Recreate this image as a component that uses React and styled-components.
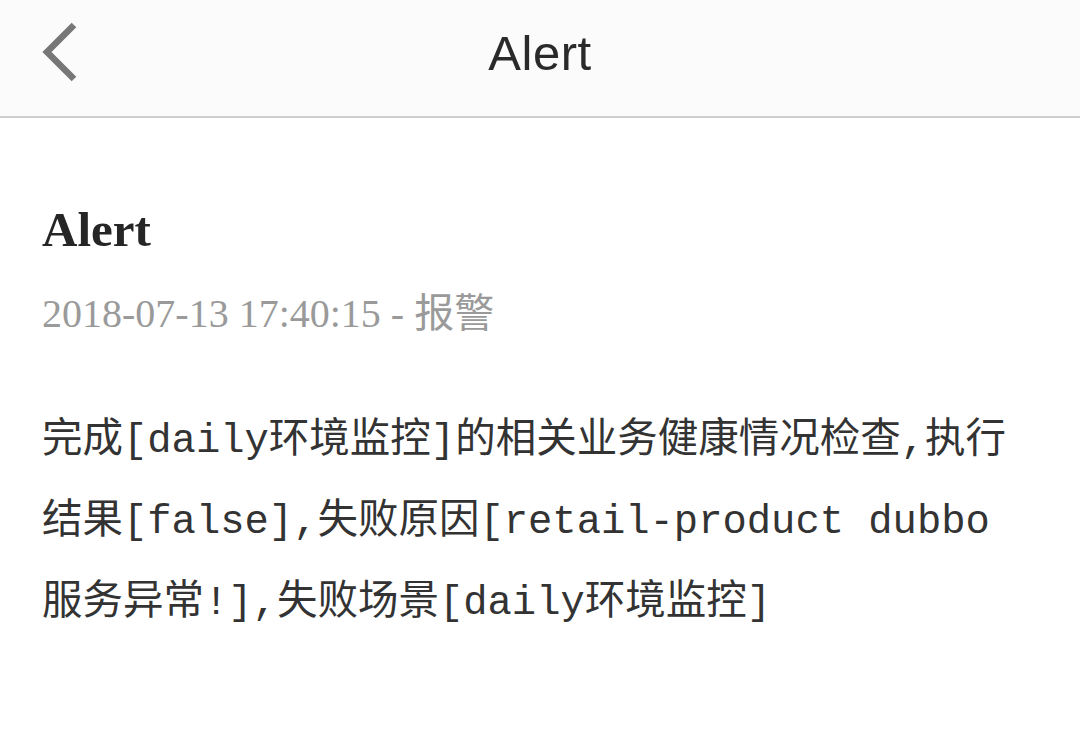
import React from "react";
import styled, { createGlobalStyle } from "styled-components";

const GlobalStyle = createGlobalStyle`
  html, body {
    margin: 0;
    padding: 0;
    background: #ffffff;
  }
  #root {
    width: 1080px;
    height: 734px;
    overflow: hidden;
  }
`;

const BackIcon = () => (
  <svg width="42" height="66" viewBox="0 0 42 66" fill="none">
    <path
      d="M36 6 L9 33 L36 60"
      stroke="#777777"
      strokeWidth="6.5"
      strokeLinecap="butt"
      strokeLinejoin="miter"
    />
  </svg>
);

const App = () => {
  return (
    <Page>
      <GlobalStyle />
      <NavBar>
        <BackButton>
          <BackIcon />
        </BackButton>
        <NavTitle>Alert</NavTitle>
        <NavSpacer />
      </NavBar>
      <Article>
        <Title>Alert</Title>
        <Meta>2018-07-13 17:40:15 - 报警</Meta>
        <Body>
          完成[daily环境监控]的相关业务健康情况检查,执行
          结果[false],失败原因[retail-product dubbo
          服务异常!],失败场景[daily环境监控]
        </Body>
      </Article>
    </Page>
  );
};

export default App;

const Page = styled.div`
  width: 1080px;
  height: 734px;
  display: flex;
  flex-direction: column;
  background: #ffffff;
`;

const NavBar = styled.header`
  height: 116px;
  display: grid;
  grid-template-columns: 120px 1fr 120px;
  align-items: center;
  background: #fbfbfb;
  border-bottom: 2px solid #cfcfcf;
  box-sizing: content-box;
`;

const BackButton = styled.div`
  display: flex;
  align-items: center;
  padding-left: 38px;
  margin-top: -12px;
`;

const NavTitle = styled.div`
  text-align: center;
  font-family: "Liberation Sans", Arial, sans-serif;
  font-size: 49px;
  color: #2a2a2a;
  margin-top: -10px;
  letter-spacing: 0.5px;
`;

const NavSpacer = styled.div``;

const Article = styled.main`
  padding: 83px 42px 0 42px;
  display: flex;
  flex-direction: column;
`;

const Title = styled.h1`
  margin: 0;
  font-family: "Liberation Serif", "Times New Roman", serif;
  font-weight: 700;
  font-size: 49px;
  line-height: 1.2;
  color: #262626;
`;

const Meta = styled.div`
  margin-top: 30px;
  font-family: "Liberation Serif", "Noto Sans CJK SC", serif;
  font-size: 40px;
  line-height: 1.2;
  color: #9a9a9a;
`;

const Body = styled.p`
  margin: 63px 0 0 0;
  width: 1000px;
  font-family: "Liberation Mono", "Noto Sans CJK SC", monospace;
  font-size: 40.5px;
  line-height: 81px;
  color: #333333;
  word-break: break-all;
`;
